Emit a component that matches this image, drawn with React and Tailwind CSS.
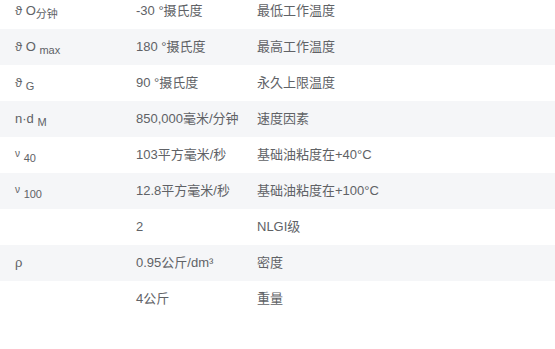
import React from "react";

const rows = [
  { s: <>ϑ O<sub className="text-[11px]">分钟</sub></>, v: "-30 °摄氏度", d: "最低工作温度" },
  { s: <>ϑ O <sub className="text-[11px]">max</sub></>, v: "180 °摄氏度", d: "最高工作温度" },
  { s: <>ϑ <sub className="text-[11px]">G</sub></>, v: "90 °摄氏度", d: "永久上限温度" },
  { s: <>n·d <sub className="text-[11px]">M</sub></>, v: "850,000毫米/分钟", d: "速度因素" },
  { s: <><span className="text-[10px] align-[2px]">ν</span> <sub className="text-[11px]">40</sub></>, v: "103平方毫米/秒", d: "基础油粘度在+40°C" },
  { s: <><span className="text-[10px] align-[2px]">ν</span> <sub className="text-[11px]">100</sub></>, v: "12.8平方毫米/秒", d: "基础油粘度在+100°C" },
  { s: "", v: "2", d: "NLGI级" },
  { s: "ρ", v: "0.95公斤/dm³", d: "密度" },
  { s: "", v: "4公斤", d: "重量" },
];

export default function App() {
  return (
    <div
      className="w-[555px] h-[349px] overflow-hidden bg-white text-[13px] text-[#606266]"
      style={{ fontFamily: '"Liberation Sans", Arial, "Noto Sans CJK SC", sans-serif' }}
    >
      <div className="-mt-[7px]">
        {rows.map((r, i) => (
          <div key={i} className={`flex h-9 items-center ${i % 2 === 1 ? "bg-[#f5f6f8]" : "bg-white"}`}>
            <div className="w-[121px] pl-[15px]">{r.s}</div>
            <div className="w-[121px] pl-[15px]">{r.v}</div>
            <div className="flex-1 pl-[15px]">{r.d}</div>
          </div>
        ))}
      </div>
    </div>
  );
}
